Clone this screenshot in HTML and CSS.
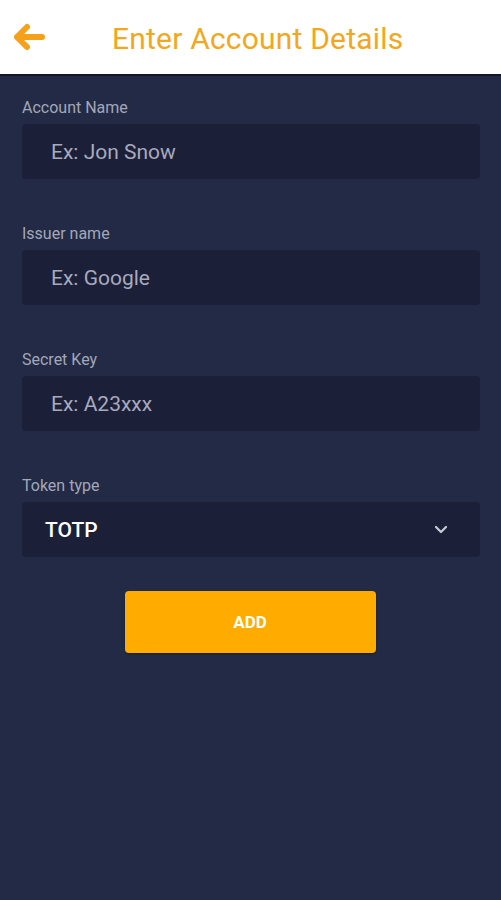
FILE: index.html
```html
<!DOCTYPE html>
<html lang="en">
<head>
    <meta charset="UTF-8">
    <meta name="viewport" content="width=device-width, initial-scale=1.0">
    <title>Enter Account Details</title>
    <link rel="stylesheet" href="styles.css">
</head>
<body>
    <div class="header">
        <span class="back">
            <svg width="32" height="28" viewBox="0 0 32 28">
                <path d="M14 4 L4 14 L14 24 M4 14 L29 14" fill="none" stroke="#f5a11c" stroke-width="6" stroke-linecap="round" stroke-linejoin="round"/>
            </svg>
        </span>
        <h1>Enter Account Details</h1>
    </div>

    <div class="form">
        <div class="field">
            <label>Account Name</label>
            <div class="box placeholder">Ex: Jon Snow</div>
        </div>
        <div class="field">
            <label>Issuer name</label>
            <div class="box placeholder">Ex: Google</div>
        </div>
        <div class="field">
            <label>Secret Key</label>
            <div class="box placeholder">Ex: A23xxx</div>
        </div>
        <div class="field">
            <label>Token type</label>
            <div class="box select">
                <span>TOTP</span>
                <svg width="14" height="10" viewBox="0 0 14 10">
                    <path d="M2 2 L7 7 L12 2" fill="none" stroke="#c9cbd6" stroke-width="2.2" stroke-linecap="round" stroke-linejoin="round"/>
                </svg>
            </div>
        </div>
        <div class="actions">
            <button>ADD</button>
        </div>
    </div>
</body>
</html>
```

FILE: styles.css
```css
body {
    margin: 0;
    font-family: Roboto, "Noto Sans", Arial, sans-serif;
    background-color: #222a45;
    height: 900px;
}

.header {
    height: 74px;
    background-color: #ffffff;
    display: flex;
    align-items: center;
    border-bottom: 2px solid #121627;
}

.back {
    width: 72px;
    padding-left: 13px;
    padding-top: 4px;
    box-sizing: border-box;
}

.header h1 {
    margin: 2px 0 0 40px;
    font-size: 30px;
    font-weight: 400;
    color: #f2a71d;
    letter-spacing: 0.2px;
}

.form {
    padding: 22px 21px 0 22px;
}

.field {
    margin-bottom: 45px;
}

.field label {
    display: block;
    font-size: 16px;
    color: #a3a7b8;
    height: 21px;
    margin-bottom: 5px;
}

.box {
    height: 55px;
    background-color: #1b1f38;
    border-radius: 4px;
    box-sizing: border-box;
    display: flex;
    align-items: center;
    font-size: 21px;
}

.placeholder {
    padding-left: 29px;
    color: #a7aabd;
}

.select {
    padding: 0 32px 0 23px;
    justify-content: space-between;
    color: #ffffff;
    font-weight: 500;
}

.actions {
    display: flex;
    justify-content: center;
    margin-top: -11px;
    padding-right: 2px;
}

.actions button {
    width: 251px;
    height: 62px;
    border: none;
    border-radius: 4px;
    background-color: #ffab00;
    color: #ffffff;
    font-family: Roboto, Arial, sans-serif;
    font-weight: 700;
    font-size: 17px;
    box-shadow: 0 1px 2px rgba(0, 0, 0, 0.3);
}
```
